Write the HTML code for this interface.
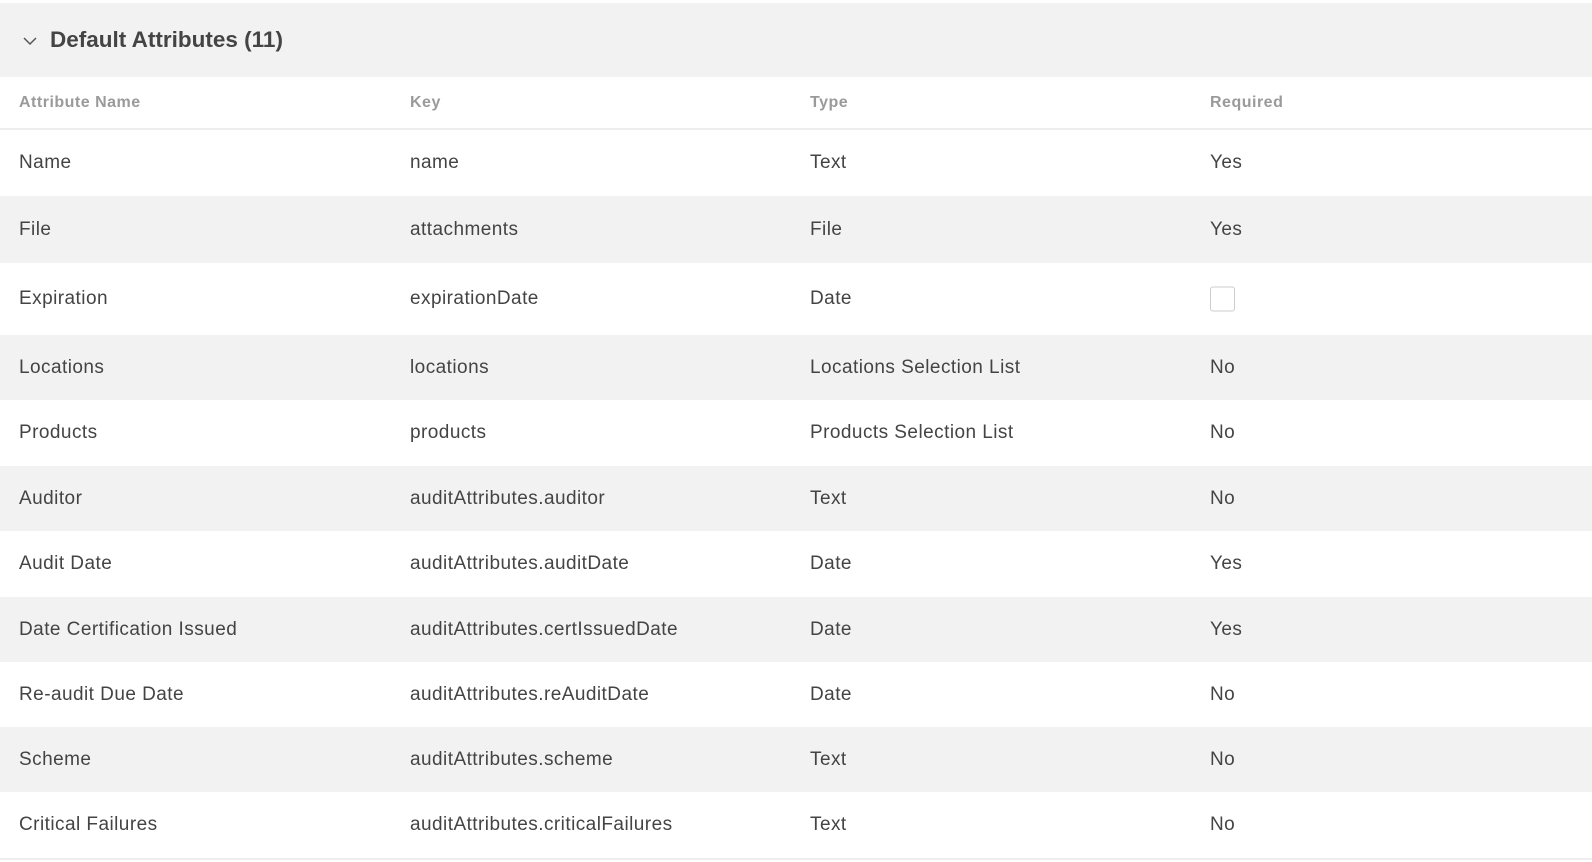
<!DOCTYPE html>
<html><head><style>
*{margin:0;padding:0;box-sizing:border-box}
body{width:1592px;height:862px;background:#fff;font-family:"Liberation Sans",sans-serif;color:#444;overflow:hidden;position:relative}
.top{position:absolute;top:3px;left:0;width:1592px;height:74px;background:#f2f2f2}
.top .t{position:absolute;left:50px;top:24px;font-size:22.5px;font-weight:bold;color:#444}
.top svg{position:absolute;left:23px;top:34px}
.hdr{position:absolute;top:77px;left:0;width:1592px;height:53px;border-bottom:2px solid #eee}
.hdr span{position:absolute;top:17px;font-size:16px;font-weight:bold;color:#9a9a9a;letter-spacing:0.5px}
.row{position:absolute;left:0;width:1592px}
.row span{position:absolute;font-size:19px;letter-spacing:0.45px;color:#444;top:50%;transform:translateY(-50%)}
.g{background:#f2f2f2}
.c1{left:19px}.c2{left:410px}.c3{left:810px}.c4{left:1210px}
.cb{width:25px;height:25px;border:1.5px solid #ccc;border-radius:3px;background:#fff}
.bl{position:absolute;top:858px;left:0;width:1592px;height:2px;background:#eee}
</style></head><body>
<div class="top"><svg width="14" height="9" viewBox="0 0 14 9"><path d="M1 1l6 6 6-6" fill="none" stroke="#555" stroke-width="1.5"/></svg><div class="t">Default Attributes (11)</div></div>
<div class="hdr"><span style="left:19px">Attribute Name</span><span style="left:410px">Key</span><span style="left:810px">Type</span><span style="left:1210px">Required</span></div>
<div class="row" style="top:130px;height:66px"><span class="c1">Name</span><span class="c2">name</span><span class="c3">Text</span><span class="c4">Yes</span></div>
<div class="row g" style="top:196px;height:67px"><span class="c1">File</span><span class="c2">attachments</span><span class="c3">File</span><span class="c4">Yes</span></div>
<div class="row" style="top:263px;height:72px"><span class="c1">Expiration</span><span class="c2">expirationDate</span><span class="c3">Date</span><span class="c4 cb"></span></div>
<div class="row g" style="top:335px;height:65px"><span class="c1">Locations</span><span class="c2">locations</span><span class="c3">Locations Selection List</span><span class="c4">No</span></div>
<div class="row" style="top:400px;height:66px"><span class="c1">Products</span><span class="c2">products</span><span class="c3">Products Selection List</span><span class="c4">No</span></div>
<div class="row g" style="top:466px;height:65px"><span class="c1">Auditor</span><span class="c2">auditAttributes.auditor</span><span class="c3">Text</span><span class="c4">No</span></div>
<div class="row" style="top:531px;height:66px"><span class="c1">Audit Date</span><span class="c2">auditAttributes.auditDate</span><span class="c3">Date</span><span class="c4">Yes</span></div>
<div class="row g" style="top:597px;height:65px"><span class="c1">Date Certification Issued</span><span class="c2">auditAttributes.certIssuedDate</span><span class="c3">Date</span><span class="c4">Yes</span></div>
<div class="row" style="top:662px;height:65px"><span class="c1">Re-audit Due Date</span><span class="c2">auditAttributes.reAuditDate</span><span class="c3">Date</span><span class="c4">No</span></div>
<div class="row g" style="top:727px;height:65px"><span class="c1">Scheme</span><span class="c2">auditAttributes.scheme</span><span class="c3">Text</span><span class="c4">No</span></div>
<div class="row" style="top:792px;height:66px"><span class="c1">Critical Failures</span><span class="c2">auditAttributes.criticalFailures</span><span class="c3">Text</span><span class="c4">No</span></div>
<div class="bl"></div>
</body></html>
